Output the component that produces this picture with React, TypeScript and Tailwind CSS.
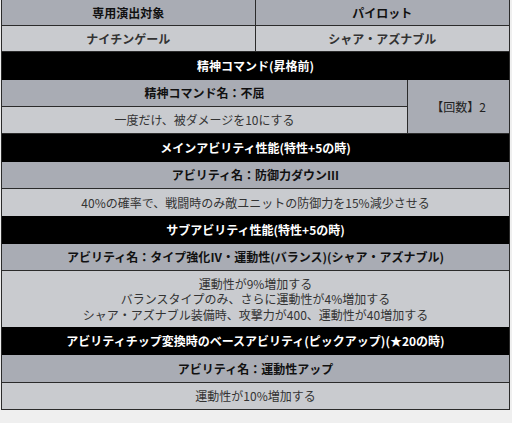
const font = "font-['Meiryo','Noto_Sans_CJK_JP',sans-serif]";

function HeadCell({ children, className = "" }: { children: React.ReactNode; className?: string }) {
  return (
    <div className={`flex items-center justify-center bg-[#a9acb4] text-[12px] font-bold text-[#111] ${className}`}>
      {children}
    </div>
  );
}

function BodyCell({ children, className = "" }: { children: React.ReactNode; className?: string }) {
  return (
    <div className={`flex items-center justify-center bg-[#c9cbcf] text-[12px] text-[#333] ${className}`}>
      {children}
    </div>
  );
}

function BlackRow({ children }: { children: React.ReactNode }) {
  return (
    <div className="flex h-[28px] items-center justify-center bg-black text-[12px] font-bold text-white">
      {children}
    </div>
  );
}

export default function App() {
  return (
    <div className={`min-h-[423px] bg-[#efefef] pl-px ${font}`}>
      <div className="w-[509px] border-x border-[#2b2b2b]">
        {/* 専用演出 */}
        <div className="grid h-[26px] grid-cols-2 border-b border-[#2b2b2b]">
          <HeadCell className="border-r border-[#2b2b2b] text-[12.5px]">専用演出対象</HeadCell>
          <HeadCell className="text-[12.5px]">パイロット</HeadCell>
        </div>
        <div className="grid h-[26px] grid-cols-2 border-b border-[#2b2b2b]">
          <BodyCell className="border-r border-[#2b2b2b] font-bold text-[#111] text-[12.5px]">ナイチンゲール</BodyCell>
          <BodyCell className="font-bold text-[#111] text-[12.5px]">シャア・アズナブル</BodyCell>
        </div>

        {/* 精神コマンド */}
        <BlackRow>精神コマンド(昇格前)</BlackRow>
        <div className="flex border-b border-[#2b2b2b]">
          <div className="flex w-[406px] flex-col border-r border-[#2b2b2b]">
            <HeadCell className="h-[27px] border-b border-[#2b2b2b]">精神コマンド名：不屈</HeadCell>
            <BodyCell className="h-[26px]">一度だけ、被ダメージを10にする</BodyCell>
          </div>
          <HeadCell className="flex-1 font-normal text-[#222]">【回数】2</HeadCell>
        </div>

        {/* メインアビリティ */}
        <BlackRow>メインアビリティ性能(特性+5の時)</BlackRow>
        <HeadCell className="h-[27px] border-b border-[#2b2b2b]">アビリティ名：防御力ダウンⅢ</HeadCell>
        <BodyCell className="h-[27px]">40%の確率で、戦闘時のみ敵ユニットの防御力を15%減少させる</BodyCell>

        {/* サブアビリティ */}
        <BlackRow>サブアビリティ性能(特性+5の時)</BlackRow>
        <HeadCell className="h-[27px] border-b border-[#2b2b2b]">
          アビリティ名：タイプ強化Ⅳ・運動性(バランス)(シャア・アズナブル)
        </HeadCell>
        <BodyCell className="h-[56px] flex-col leading-[15.5px]">
          <span>運動性が9%増加する</span>
          <span>バランスタイプのみ、さらに運動性が4%増加する</span>
          <span>シャア・アズナブル装備時、攻撃力が400、運動性が40増加する</span>
        </BodyCell>

        {/* アビリティチップ */}
        <BlackRow>アビリティチップ変換時のベースアビリティ(ピックアップ)(★20の時)</BlackRow>
        <HeadCell className="h-[28px] border-b border-[#2b2b2b]">アビリティ名：運動性アップ</HeadCell>
        <BodyCell className="h-[27px] border-b border-[#2b2b2b]">運動性が10%増加する</BodyCell>
      </div>
    </div>
  );
}
